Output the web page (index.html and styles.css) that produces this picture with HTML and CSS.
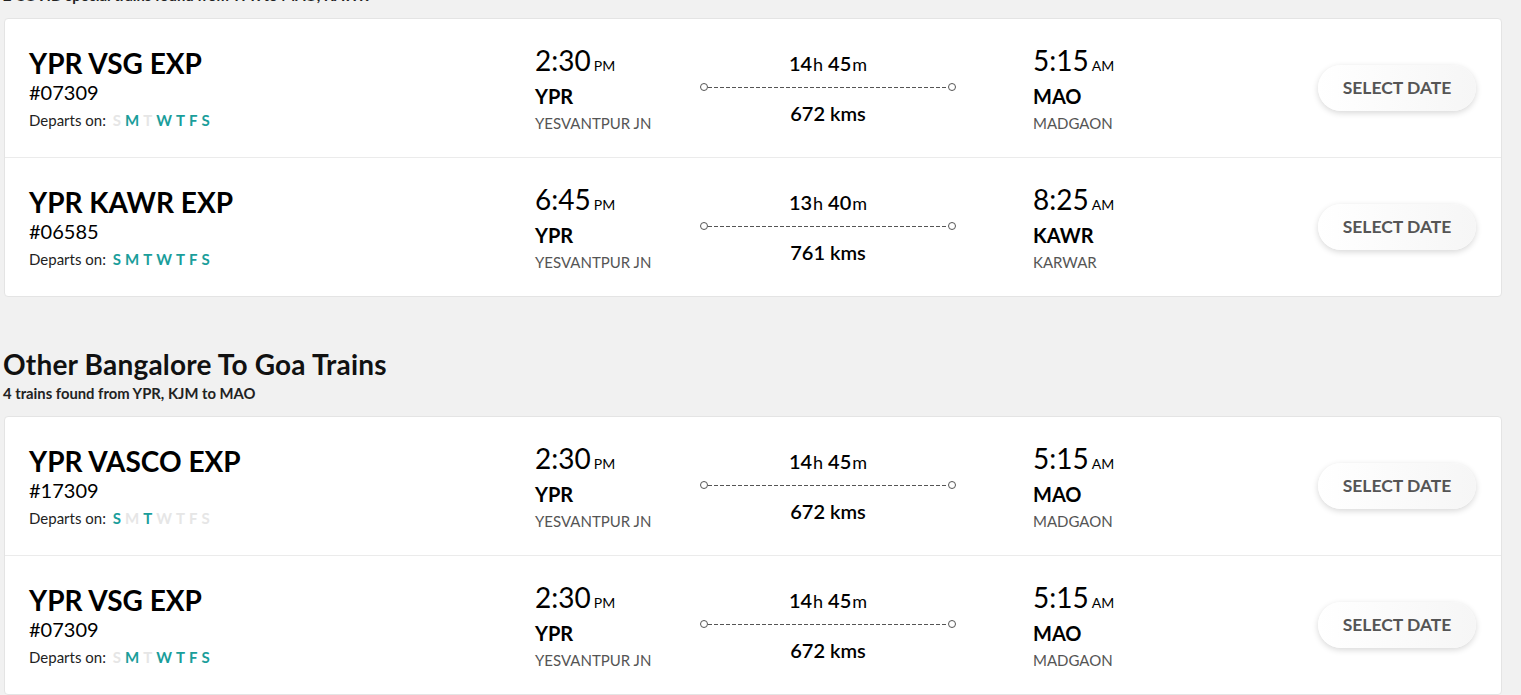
FILE: index.html
```html
<!DOCTYPE html>
<html>
<head>
<meta charset="utf-8">
<link rel="stylesheet" href="styles.css">
</head>
<body>
<div class="page">
  <section class="group first">
    <h2 class="group-title">COVID Special Trains</h2>
    <p class="group-sub">2 COVID special trains found from YPR to MAO, KAWR</p>
    <div class="card">
      <div class="row">
        <div class="train">
          <div class="train-name">YPR VSG EXP</div>
          <div class="train-no">#07309</div>
          <div class="days">Departs on: <span class="day off">S</span><span class="day">M</span><span class="day off">T</span><span class="day">W</span><span class="day">T</span><span class="day">F</span><span class="day">S</span></div>
        </div>
        <div class="stop">
          <div class="time">2:30<span class="ampm">PM</span></div>
          <div class="code">YPR</div>
          <div class="station">YESVANTPUR JN</div>
        </div>
        <div class="journey">
          <div class="dur">14<span class="unit">h</span> 45<span class="unit">m</span></div>
          <div class="track"><span class="dot"></span><span class="dash"></span><span class="dot"></span></div>
          <div class="dist">672 kms</div>
        </div>
        <div class="stop arr">
          <div class="time">5:15<span class="ampm">AM</span></div>
          <div class="code">MAO</div>
          <div class="station">MADGAON</div>
        </div>
        <button class="select">SELECT DATE</button>
      </div>
      <div class="row">
        <div class="train">
          <div class="train-name">YPR KAWR EXP</div>
          <div class="train-no">#06585</div>
          <div class="days">Departs on: <span class="day">S</span><span class="day">M</span><span class="day">T</span><span class="day">W</span><span class="day">T</span><span class="day">F</span><span class="day">S</span></div>
        </div>
        <div class="stop">
          <div class="time">6:45<span class="ampm">PM</span></div>
          <div class="code">YPR</div>
          <div class="station">YESVANTPUR JN</div>
        </div>
        <div class="journey">
          <div class="dur">13<span class="unit">h</span> 40<span class="unit">m</span></div>
          <div class="track"><span class="dot"></span><span class="dash"></span><span class="dot"></span></div>
          <div class="dist">761 kms</div>
        </div>
        <div class="stop arr">
          <div class="time">8:25<span class="ampm">AM</span></div>
          <div class="code">KAWR</div>
          <div class="station">KARWAR</div>
        </div>
        <button class="select">SELECT DATE</button>
      </div>
    </div>
  </section>

  <section class="group">
    <h2 class="group-title">Other Bangalore To Goa Trains</h2>
    <p class="group-sub">4 trains found from YPR, KJM to MAO</p>
    <div class="card">
      <div class="row">
        <div class="train">
          <div class="train-name">YPR VASCO EXP</div>
          <div class="train-no">#17309</div>
          <div class="days">Departs on: <span class="day">S</span><span class="day off">M</span><span class="day">T</span><span class="day off">W</span><span class="day off">T</span><span class="day off">F</span><span class="day off">S</span></div>
        </div>
        <div class="stop">
          <div class="time">2:30<span class="ampm">PM</span></div>
          <div class="code">YPR</div>
          <div class="station">YESVANTPUR JN</div>
        </div>
        <div class="journey">
          <div class="dur">14<span class="unit">h</span> 45<span class="unit">m</span></div>
          <div class="track"><span class="dot"></span><span class="dash"></span><span class="dot"></span></div>
          <div class="dist">672 kms</div>
        </div>
        <div class="stop arr">
          <div class="time">5:15<span class="ampm">AM</span></div>
          <div class="code">MAO</div>
          <div class="station">MADGAON</div>
        </div>
        <button class="select">SELECT DATE</button>
      </div>
      <div class="row">
        <div class="train">
          <div class="train-name">YPR VSG EXP</div>
          <div class="train-no">#07309</div>
          <div class="days">Departs on: <span class="day off">S</span><span class="day">M</span><span class="day off">T</span><span class="day">W</span><span class="day">T</span><span class="day">F</span><span class="day">S</span></div>
        </div>
        <div class="stop">
          <div class="time">2:30<span class="ampm">PM</span></div>
          <div class="code">YPR</div>
          <div class="station">YESVANTPUR JN</div>
        </div>
        <div class="journey">
          <div class="dur">14<span class="unit">h</span> 45<span class="unit">m</span></div>
          <div class="track"><span class="dot"></span><span class="dash"></span><span class="dot"></span></div>
          <div class="dist">672 kms</div>
        </div>
        <div class="stop arr">
          <div class="time">5:15<span class="ampm">AM</span></div>
          <div class="code">MAO</div>
          <div class="station">MADGAON</div>
        </div>
        <button class="select">SELECT DATE</button>
      </div>
    </div>
  </section>
</div>
</body>
</html>
```

FILE: styles.css
```css
* { box-sizing: border-box; }
html, body { margin: 0; padding: 0; }
body {
  background: #f1f1f1;
  font-family: Lato, "Open Sans", Arial, sans-serif;
  color: #111;
  overflow: hidden;
}
.page {
  padding: 0 19px 0 4px;
}
.group.first {
  margin-top: -51px;
}
.group + .group {
  margin-top: 50px;
}
.group-title {
  margin: 0 0 0 -1px;
  font-size: 28px;
  line-height: 34px;
  font-weight: 700;
  letter-spacing: 0.2px;
  color: #111;
}
.group-sub {
  margin: 4px 0 0 -1px;
  font-size: 14.8px;
  line-height: 17px;
  font-weight: 700;
  color: #222;
}
.card {
  margin-top: 14px;
  background: #fff;
  border: 1px solid #e4e4e4;
  border-radius: 4px;
}
.row {
  display: grid;
  grid-template-columns: 506px 165px 256px 77px 1fr 158px;
  align-items: start;
  height: 139px;
  padding: 24px 25px 0 24px;
  border-bottom: 1px solid #ebebeb;
}
.row:last-child { border-bottom: none; height: 138px; }
.train { padding-top: 6px; }
.train-name {
  font-size: 28px;
  line-height: 29px;
  font-weight: 700;
  color: #000;
}
.train-no {
  font-size: 20px;
  line-height: 28px;
  font-weight: 400;
  color: #000;
}
.days {
  margin-top: 6px;
  font-size: 15px;
  line-height: 17px;
  color: #222;
}
.day {
  font-weight: 700;
  color: #1a9e9b;
  margin-left: 4px;
}
.day:first-child { margin-left: 3px; }
.day.off { color: #e6e6e6; }
.stop { grid-column: 2; }
.stop.arr { grid-column: 5; }
.time {
  font-size: 28px;
  line-height: 34px;
  color: #000;
}
.ampm {
  font-size: 14px;
  margin-left: 3px;
}
.code {
  margin-top: 1px;
  font-size: 20px;
  line-height: 24px;
  font-weight: 700;
  color: #000;
}
.station {
  margin-top: 6px;
  font-size: 15px;
  line-height: 19px;
  color: #555;
}
.journey {
  grid-column: 3;
  padding-top: 8px;
  text-align: center;
}
.dur {
  font-size: 20px;
  line-height: 24px;
  font-weight: 600;
  color: #000;
}
.unit {
  font-size: 18px;
  font-weight: 400;
  margin-left: 1px;
}
.track {
  display: flex;
  align-items: center;
  height: 10px;
  margin-top: 6px;
}
.dot {
  width: 8px;
  height: 8px;
  border: 1px solid #555;
  border-radius: 50%;
  flex: none;
}
.dash {
  flex: 1;
  height: 1px;
  background: repeating-linear-gradient(to right, #555 0 4px, transparent 4px 6px);
}
.dist {
  margin-top: 9px;
  font-size: 20px;
  line-height: 24px;
  font-weight: 600;
  color: #000;
}
.select {
  grid-column: 6;
  align-self: center;
  margin-top: -25px;
  width: 158px;
  height: 46px;
  border: none;
  border-radius: 23px;
  background: linear-gradient(to right, #fff, #f6f6f6);
  box-shadow: 0 2px 6px rgba(0, 0, 0, 0.16);
  font-family: Lato, "Open Sans", Arial, sans-serif;
  font-size: 17.5px;
  font-weight: 700;
  color: #555;
  padding: 0;
}
```
